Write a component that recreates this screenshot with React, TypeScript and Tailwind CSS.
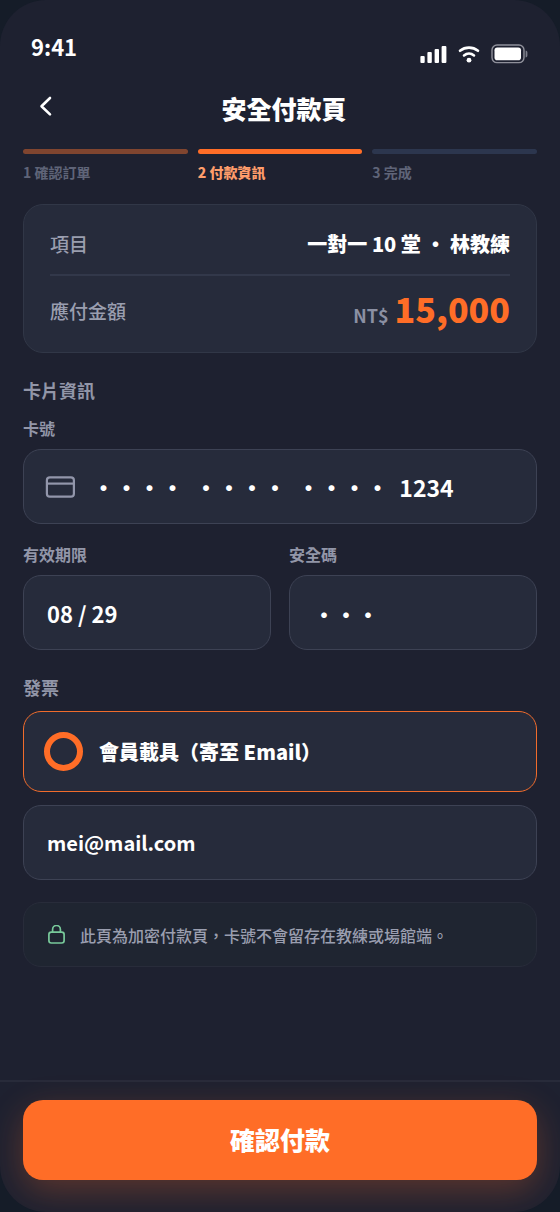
import { useState } from "react";
import type { InputHTMLAttributes, ReactNode } from "react";
import clsx from "clsx";

const steps = [
  { label: "1 確認訂單", bar: "bg-[#80452f]", text: "font-bold text-[#5f6478]" },
  { label: "2 付款資訊", bar: "bg-[#ff6d27]", text: "font-black text-[#ff9d6b]" },
  { label: "3 完成", bar: "bg-[#2c364e]", text: "font-bold text-[#5f6478]" },
];

const App = () => {
  const [card, setCard] = useState("•••• \u00a0•••• \u00a0•••• \u00a01234");
  const [expiry, setExpiry] = useState("08 / 29");
  const [cvc, setCvc] = useState("•••");
  const [email, setEmail] = useState("mei@mail.com");

  return (
    <div
      lang="zh-Hant"
      className="min-h-screen bg-[#151c28] font-['Noto_Sans_CJK_TC',sans-serif] text-white"
    >
      <div className="flex min-h-screen flex-col overflow-hidden rounded-[46px] bg-[#1e2130]">
        <StatusBar />

        <header className="grid grid-cols-[46px_1fr_38px] items-center px-[23px] pt-5">
          <button type="button" aria-label="返回" className="flex h-12 items-center justify-center pb-1">
            <svg viewBox="0 0 24 24" className="size-6" fill="none" stroke="currentColor" strokeWidth="2.6" strokeLinecap="round" strokeLinejoin="round">
              <path d="M16 4 7.5 12.2l8.5 8.2" />
            </svg>
          </button>
          <h1 className="text-center text-[25px] leading-[48px] font-black">安全付款頁</h1>
        </header>

        <ol className="grid grid-cols-3 gap-[10px] px-[23px] pt-[17px]">
          {steps.map((step) => (
            <li key={step.label}>
              <div className={clsx("h-[5px] rounded-full", step.bar)} />
              <p className={clsx("pt-2 text-sm leading-5", step.text)}>{step.label}</p>
            </li>
          ))}
        </ol>

        <main className="flex-1 px-[23px] pt-[22px] pb-6">
          <dl className="rounded-[20px] border border-[#313747] bg-[#262b3b] px-[26px]">
            <div className="flex items-center justify-between border-b-2 border-[#32384a] pt-[19px] pb-[10px]">
              <dt className="text-[19px] leading-10 font-medium text-[#9a9eaf]">項目</dt>
              <dd className="text-xl leading-10 font-black">一對一 10 堂 • 林教練</dd>
            </div>
            <div className="flex items-center justify-between pt-[6px] pb-3">
              <dt className="text-[19px] leading-10 font-medium text-[#9a9eaf]">應付金額</dt>
              <dd className="flex items-baseline gap-[6px] pb-1 leading-[54px]">
                <span className="text-lg font-bold text-[#8b90a3]">NT$</span>
                <span className="text-[34px] font-black text-[#ff6d27]">15,000</span>
              </dd>
            </div>
          </dl>

          <SectionTitle>卡片資訊</SectionTitle>
          <Field
            id="card"
            label="卡號"
            inputMode="numeric"
            value={card}
            onChange={(e) => setCard(e.target.value)}
            className="pr-4 pl-[68px] text-[23px]"
            icon={<CardIcon />}
          />
          <div className="grid grid-cols-2 gap-[18px] pt-[6px]">
            <Field
              id="expiry"
              label="有效期限"
              value={expiry}
              onChange={(e) => setExpiry(e.target.value)}
              className="px-[23px] text-[22px]"
            />
            <Field
              id="cvc"
              label="安全碼"
              value={cvc}
              onChange={(e) => setCvc(e.target.value)}
              className="px-[23px] text-[22px]"
            />
          </div>

          <SectionTitle>發票</SectionTitle>
          <label className="mt-[10px] flex h-[81px] items-center gap-4 rounded-[18px] border border-[#f06c2c] bg-[#262b3b] px-5">
            <input
              type="radio"
              name="invoice"
              defaultChecked
              className="size-[39px] shrink-0 appearance-none rounded-full border-[6px] border-[#ff6d27]"
            />
            <span className="text-xl font-black">會員載具（寄至 Email）</span>
          </label>
          <input
            type="email"
            aria-label="Email"
            value={email}
            onChange={(e) => setEmail(e.target.value)}
            className="mt-[13px] h-[75px] w-full rounded-[18px] border border-[#3d4254] bg-[#262b3b] px-[23px] text-xl font-bold outline-none"
          />

          <p className="mt-[22px] flex h-[65px] items-center gap-[14px] rounded-[18px] border border-[#282c3a] bg-[#1f2531] px-[23px] text-base font-medium text-[#9a9eaf]">
            <LockIcon />
            此頁為加密付款頁，卡號不會留存在教練或場館端。
          </p>
        </main>

        <footer className="border-t-2 border-[#282b3a] px-[23px] pt-[18px] pb-8">
          <button
            type="button"
            className="h-20 w-full rounded-[20px] bg-[#ff6d27] text-[25px] font-black shadow-[0_11px_34px_rgba(255,109,39,0.28)]"
          >
            確認付款
          </button>
        </footer>
      </div>
    </div>
  );
};

const StatusBar = () => (
  <div className="flex items-start justify-between pt-[30px] pr-8 pl-[31px]">
    <span className="text-[22px] leading-8 font-bold">9:41</span>
    <div className="flex items-center gap-[10px] pt-[14px]">
      <svg width="28" height="20" viewBox="0 0 28 20" fill="currentColor">
        <rect x="1.4" y="12" width="4.3" height="7" rx="1" />
        <rect x="8.4" y="8" width="4.4" height="11" rx="1" />
        <rect x="15.6" y="5" width="4.4" height="14" rx="1" />
        <rect x="22.6" y="2" width="4.8" height="17" rx="1" />
      </svg>
      <svg width="24" height="20" viewBox="0 0 24 20" fill="none" stroke="currentColor" strokeWidth="2.6" strokeLinecap="round">
        <path d="M3 6.8a14.4 14.4 0 0 1 18 0" />
        <path d="M7 11.4a8 8 0 0 1 10 0" />
        <circle cx="12" cy="16.2" r="2.4" fill="currentColor" stroke="none" />
      </svg>
      <svg width="37" height="20" viewBox="0 0 37 20">
        <rect x="1" y="1" width="32" height="17.6" rx="5" fill="none" stroke="#8f909a" strokeWidth="1.4" />
        <rect x="3.5" y="3.4" width="26.5" height="12.8" rx="2.8" fill="#fff" />
        <path d="M34.6 6.5c1.2.4 1.8 1 1.8 2v3c0 1-.6 1.6-1.8 2z" fill="#7d7f8b" />
      </svg>
    </div>
  </div>
);

const SectionTitle = ({ children }: { children: ReactNode }) => (
  <h2 className="pt-[23px] text-lg leading-7 font-bold text-[#9296a8]">{children}</h2>
);

type FieldProps = InputHTMLAttributes<HTMLInputElement> & {
  id: string;
  label: string;
  icon?: ReactNode;
};

const Field = ({ id, label, icon, className, ...props }: FieldProps) => (
  <div>
    <label htmlFor={id} className="block pt-3 pb-[9px] text-base leading-6 font-bold text-[#9296a8]">
      {label}
    </label>
    <div className="relative">
      {icon}
      <input
        id={id}
        className={clsx(
          "h-[75px] w-full rounded-[18px] border border-[#3d4254] bg-[#262b3b] font-bold outline-none",
          className
        )}
        {...props}
      />
    </div>
  </div>
);

const CardIcon = () => (
  <svg
    width="30"
    height="22"
    viewBox="0 0 30 22"
    fill="none"
    stroke="#9296ab"
    strokeWidth="2.2"
    className="pointer-events-none absolute top-[27px] left-[22px]"
  >
    <rect x="1.9" y="1.3" width="27" height="19.4" rx="3" />
    <path d="M1.9 7.6h27" />
  </svg>
);

const LockIcon = () => (
  <svg width="19" height="20" viewBox="0 0 19 20" fill="none" stroke="#78c99a" strokeWidth="1.7" className="shrink-0">
    <rect x="1.9" y="7.2" width="15.2" height="10.8" rx="2.4" />
    <path d="M5.6 7.2V4.4a3.9 3.9 0 0 1 7.8 0v2.8" />
  </svg>
);

export default App;
